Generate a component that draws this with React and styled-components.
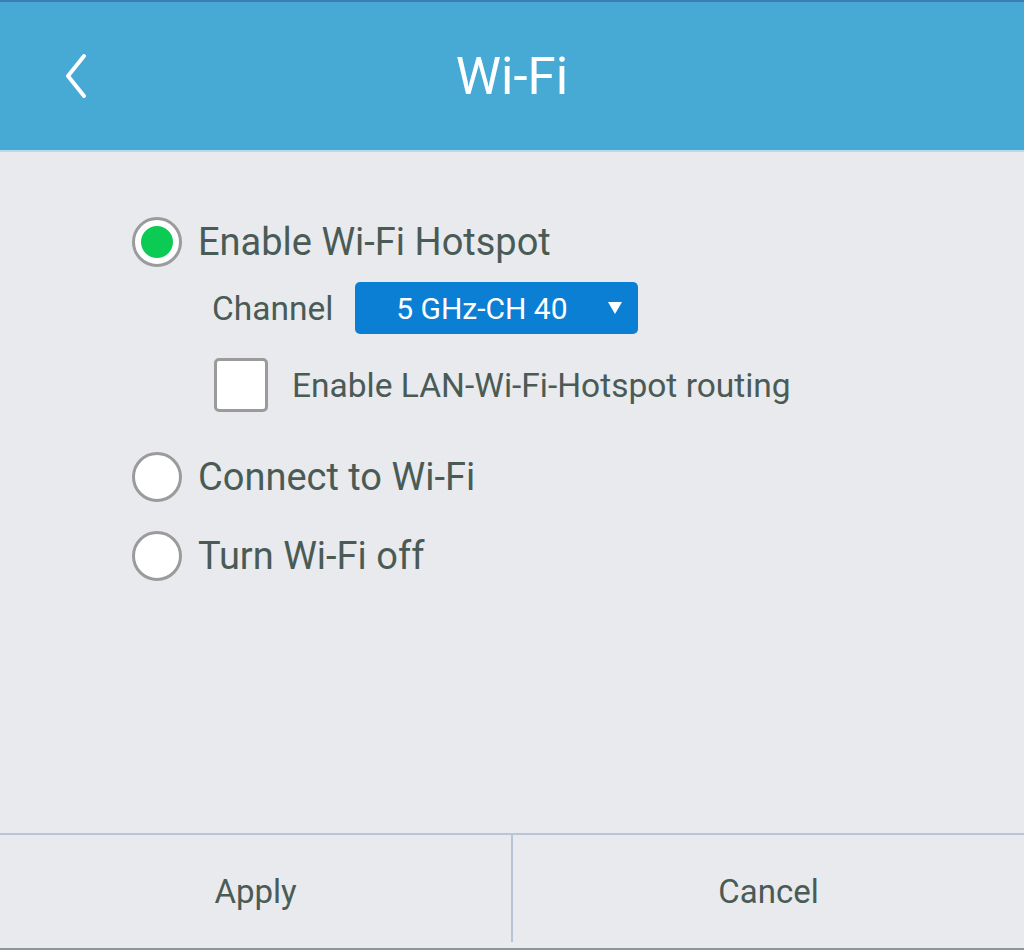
import React, { useState } from "react";
import styled, { createGlobalStyle } from "styled-components";

const GlobalStyle = createGlobalStyle`
  html, body {
    margin: 0;
    padding: 0;
    background: #e8eaed;
  }
  body {
    font-family: Roboto, "Noto Sans", "Liberation Sans", sans-serif;
  }
`;

const Screen = styled.div`
  width: 1024px;
  height: 950px;
  display: flex;
  flex-direction: column;
  background: #e8eaed;
  color: #4a5b56;
  box-sizing: border-box;
  border-bottom: 2px solid #8e959c;
`;

const Header = styled.header`
  height: 152px;
  flex-shrink: 0;
  box-sizing: border-box;
  background: #46aad4;
  border-top: 2px solid #3a7db4;
  border-bottom: 2px solid #b6d9ec;
  display: grid;
  grid-template-columns: 1fr auto 1fr;
  align-items: center;
`;

const BackButton = styled.button`
  justify-self: start;
  margin-left: 56px;
  width: 40px;
  height: 56px;
  padding: 0;
  border: none;
  background: none;
  display: flex;
  align-items: center;
  justify-content: center;
  cursor: pointer;
`;

const Title = styled.h1`
  margin: 0;
  font-size: 51px;
  font-weight: 400;
  color: #ffffff;
  line-height: 1;
`;

const Body = styled.main`
  flex: 1;
  padding: 65px 0 0 132px;
  display: flex;
  flex-direction: column;
`;

const RadioRow = styled.label`
  display: flex;
  align-items: center;
  gap: 16px;
  height: 50px;
  margin-top: ${(p) => p.$top || 0}px;
  font-size: 38px;
  cursor: pointer;
`;

const RadioCircle = styled.span`
  width: 50px;
  height: 50px;
  box-sizing: border-box;
  border-radius: 50%;
  border: 3px solid #9b9b9b;
  background: #ffffff;
  display: flex;
  align-items: center;
  justify-content: center;
  flex-shrink: 0;

  &::after {
    content: "";
    width: 32px;
    height: 32px;
    border-radius: 50%;
    background: ${(p) => (p.$checked ? "#0bcb55" : "transparent")};
  }
`;

const SubRow = styled.div`
  display: flex;
  align-items: center;
  margin-left: ${(p) => p.$indent}px;
  margin-top: ${(p) => p.$top}px;
  gap: ${(p) => p.$gap}px;
`;

const FieldLabel = styled.span`
  font-size: 33.5px;
`;

const Select = styled.button`
  width: 283px;
  height: 52px;
  box-sizing: border-box;
  border: none;
  border-radius: 5px;
  background: #0a7fd4;
  color: #ffffff;
  font-family: inherit;
  font-size: 30px;
  padding: 0 16px 0 28px;
  display: flex;
  align-items: center;
  cursor: pointer;
`;

const SelectText = styled.span`
  flex: 1;
  text-align: center;
`;

const Caret = styled.span`
  margin-left: 28px;
  width: 0;
  height: 0;
  border-left: 7px solid transparent;
  border-right: 7px solid transparent;
  border-top: 12px solid #ffffff;
`;

const CheckBox = styled.span`
  width: 54px;
  height: 54px;
  box-sizing: border-box;
  border: 3px solid #9b9b9b;
  border-radius: 5px;
  background: #ffffff;
  flex-shrink: 0;
`;

const CheckText = styled.span`
  font-size: 33.5px;
`;

const Footer = styled.footer`
  height: 113px;
  flex-shrink: 0;
  border-top: 2px solid #b9c5d6;
  display: grid;
  grid-template-columns: 1fr 2px 1fr;
`;

const Divider = styled.div`
  background: #b9c5d6;
  margin-bottom: 6px;
`;

const FooterButton = styled.button`
  border: none;
  background: none;
  font-family: inherit;
  font-size: 33px;
  color: #4a5b56;
  padding: 0;
  cursor: pointer;
`;

export default function App() {
  const [mode, setMode] = useState("hotspot");

  const options = [
    { id: "connect", label: "Connect to Wi-Fi", top: 40 },
    { id: "off", label: "Turn Wi-Fi off", top: 29 },
  ];

  return (
    <>
      <GlobalStyle />
      <Screen>
        <Header>
          <BackButton aria-label="Back">
            <svg width="28" height="48" viewBox="0 0 28 48">
              <path
                d="M22 4 L6 24 L22 44"
                fill="none"
                stroke="#ffffff"
                strokeWidth="4"
                strokeLinecap="round"
                strokeLinejoin="round"
              />
            </svg>
          </BackButton>
          <Title>Wi-Fi</Title>
          <span />
        </Header>

        <Body>
          <RadioRow onClick={() => setMode("hotspot")}>
            <RadioCircle $checked={mode === "hotspot"} />
            Enable Wi-Fi Hotspot
          </RadioRow>

          <SubRow $indent={80} $top={15} $gap={22}>
            <FieldLabel>Channel</FieldLabel>
            <Select>
              <SelectText>5 GHz-CH 40</SelectText>
              <Caret />
            </Select>
          </SubRow>

          <SubRow $indent={82} $top={24} $gap={24}>
            <CheckBox />
            <CheckText>Enable LAN-Wi-Fi-Hotspot routing</CheckText>
          </SubRow>

          {options.map((o) => (
            <RadioRow key={o.id} $top={o.top} onClick={() => setMode(o.id)}>
              <RadioCircle $checked={mode === o.id} />
              {o.label}
            </RadioRow>
          ))}
        </Body>

        <Footer>
          <FooterButton>Apply</FooterButton>
          <Divider />
          <FooterButton>Cancel</FooterButton>
        </Footer>
      </Screen>
    </>
  );
}
